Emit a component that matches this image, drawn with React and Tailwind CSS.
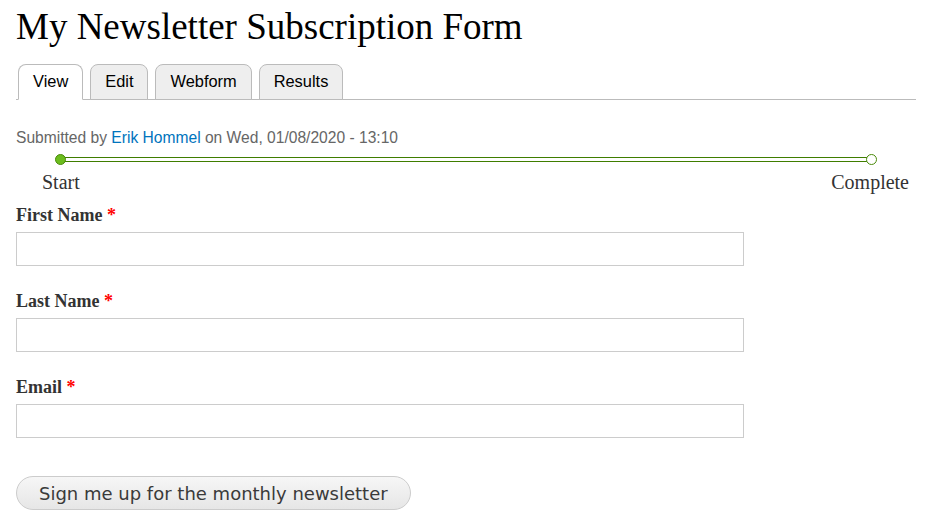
import React from 'react';

const tabs = ['View', 'Edit', 'Webform', 'Results'];
const fields = ['First Name', 'Last Name', 'Email'];

export default function App() {
    return (
        <div className="bg-white min-h-screen px-4 pt-[3px] text-[#333]">
            <h1 className="font-['Liberation_Serif',serif] text-[37px] leading-[48px] text-black">
                My Newsletter Subscription Form
            </h1>

            {/* Tabs */}
            <ul className="mt-[13px] flex gap-[7px] pl-[2px] border-b border-[#bbb] w-[900px]">
                {tabs.map((tab, i) => (
                    <li
                        key={tab}
                        className={`-mb-px h-9 flex items-center pb-px px-[14px] rounded-t-lg border border-[#bbb] font-['Liberation_Sans',Arial,sans-serif] text-[16.4px] text-black ${
                            i === 0 ? 'bg-white border-b-white' : 'bg-[#eee]'
                        }`}
                    >
                        {tab}
                    </li>
                ))}
            </ul>

            <p className="mt-[28px] font-['Liberation_Sans',Arial,sans-serif] text-[15.6px] leading-5 text-[#666]">
                Submitted by <a className="text-[#0074bd]">Erik Hommel</a> on Wed, 01/08/2020 - 13:10
            </p>

            {/* Progress */}
            <div className="w-[900px] font-['Liberation_Serif',serif] text-[20px] text-[#333]">
                <div className="relative mx-[44px] mt-[6px] h-[10px] flex items-center">
                    <div className="w-full h-[5px] border border-[#3f7d00] bg-white" />
                    <span className="absolute -left-[5px] w-[11px] h-[11px] rounded-full bg-[#6cbd1e] border border-[#4a8a0a]" />
                    <span className="absolute -right-[5px] w-[11px] h-[11px] rounded-full bg-white border border-[#4a8a0a]" />
                </div>
                <div className="flex justify-between mt-[4px] px-[26px] leading-7">
                    <span>Start</span>
                    <span className="-mr-[19px]">Complete</span>
                </div>
            </div>

            {/* Fields */}
            <form className="mt-[7px] flex flex-col gap-[23px]">
                {fields.map((f) => (
                    <div key={f} className="flex flex-col">
                        <label className="font-['Liberation_Serif',serif] font-bold text-[18px] leading-6 text-[#333] mb-[5px]">
                            {f} <span className="text-[#f00]">*</span>
                        </label>
                        <input className="w-[728px] h-[34px] border border-[#ccc] bg-white outline-none" />
                    </div>
                ))}
                <div className="mt-[15px]">
                    <button
                        type="button"
                        className="h-[34px] px-[22px] rounded-full border border-[#ccc] bg-gradient-to-b from-[#f6f6f6] to-[#e6e6e6] font-['DejaVu_Sans',sans-serif] text-[18px] text-[#3a3a3a]"
                    >
                        Sign me up for the monthly newsletter
                    </button>
                </div>
            </form>
        </div>
    );
}
